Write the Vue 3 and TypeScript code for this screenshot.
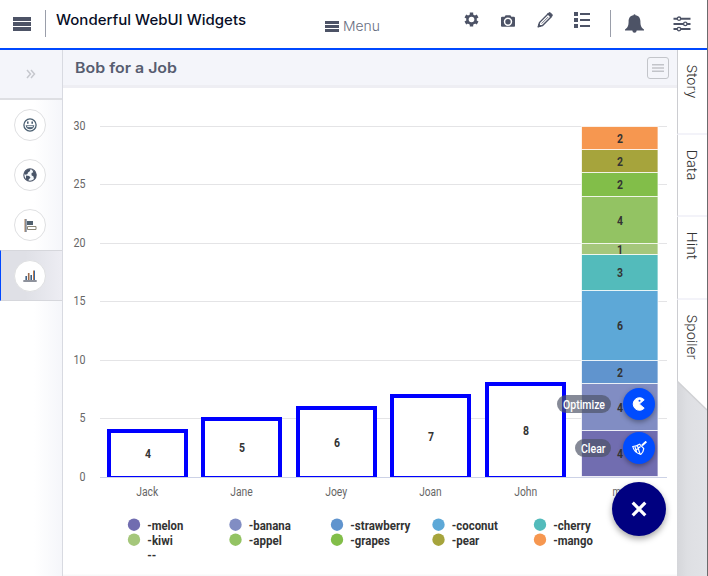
<script setup lang="ts">
interface Label { text: string; width: number }
interface Segment { value: number; top: number; bottom: number; color: string }
interface Legend extends Label { color: string; col: number; row: number }

const ticks = [
  { v: '30', y: 126.5 }, { v: '25', y: 184.5 }, { v: '20', y: 243.5 }, { v: '15', y: 301.5 },
  { v: '10', y: 360.5 }, { v: '5', y: 418.5 }, { v: '0', y: 477.5 },
]
const bars = [
  { name: 'Jack', value: 4, x: 109, top: 431, w: 22 },
  { name: 'Jane', value: 5, x: 203, top: 419, w: 22.5 },
  { name: 'Joey', value: 6, x: 298, top: 408, w: 22 },
  { name: 'Joan', value: 7, x: 392, top: 396, w: 22.5 },
  { name: 'John', value: 8, x: 487, top: 384, w: 23 },
]
const segments: Segment[] = [
  { value: 4, top: 431, bottom: 477, color: '#716db0' },
  { value: 4, top: 384, bottom: 431, color: '#818dc3' },
  { value: 2, top: 361, bottom: 384, color: '#6094ce' },
  { value: 6, top: 291, bottom: 361, color: '#5da8d7' },
  { value: 3, top: 255, bottom: 291, color: '#53bbbb' },
  { value: 1, top: 244, bottom: 255, color: '#a5c77b' },
  { value: 4, top: 197, bottom: 244, color: '#93c363' },
  { value: 2, top: 173, bottom: 197, color: '#82be49' },
  { value: 2, top: 150, bottom: 173, color: '#a6a43c' },
  { value: 2, top: 127, bottom: 150, color: '#f69750' },
]
const legend: Legend[] = [
  { text: '-melon', width: 36, color: '#716db0', col: 0, row: 0 },
  { text: '-banana', width: 42, color: '#818dc3', col: 1, row: 0 },
  { text: '-strawberry', width: 60, color: '#6094ce', col: 2, row: 0 },
  { text: '-coconut', width: 46, color: '#5da8d7', col: 3, row: 0 },
  { text: '-cherry', width: 37.5, color: '#53bbbb', col: 4, row: 0 },
  { text: '-kiwi', width: 25.5, color: '#a5c77b', col: 0, row: 1 },
  { text: '-appel', width: 33, color: '#93c363', col: 1, row: 1 },
  { text: '-grapes', width: 39.5, color: '#82be49', col: 2, row: 1 },
  { text: '-pear', width: 27.5, color: '#a6a43c', col: 3, row: 1 },
  { text: '-mango', width: 39.5, color: '#f69750', col: 4, row: 1 },
  { text: '--', width: 9, color: 'transparent', col: 0, row: 2 },
]
const tabs: Label[] = [
  { text: 'Story', width: 34 }, { text: 'Data', width: 31 },
  { text: 'Hint', width: 28 }, { text: 'Spoiler', width: 45 },
]
const sideItems = ['smile', 'globe', 'align', 'chart']
</script>

<template>
  <div class="app">
    <header class="topbar">
      <svg class="burger" width="18" height="14"><path d="M0 0h18v4H0zM0 5h18v4H0zM0 10h18v4H0z" /></svg>
      <i class="rule first"></i>
      <svg class="brand" width="192" height="24">
        <text x="0" y="17" textLength="190" lengthAdjust="spacingAndGlyphs">Wonderful WebUI Widgets</text>
      </svg>
      <div class="menu">
        <svg width="14" height="12"><path d="M0 0h14v3H0zM0 4h14v3H0zM0 8h14v3H0z" /></svg>
        <svg width="38" height="20"><text x="0" y="14" textLength="37" lengthAdjust="spacingAndGlyphs">Menu</text></svg>
      </div>
      <div class="tools">
        <svg width="15" height="15" viewBox="0 0 15 15">
          <g stroke="#4d5366" stroke-width="3.400"><path d="M7.500 .4V14.600M1.350 3.950L13.650 11.050M1.350 11.050L13.650 3.950" /></g>
          <circle cx="7.500" cy="7.500" r="5.300" /><circle cx="7.500" cy="7.500" r="2.800" fill="#fff" />
        </svg>
        <svg class="camera" width="14" height="12" viewBox="0 0 14 12">
          <path fill-rule="evenodd" d="M1.200 1.700H3.600L4.600.2h4.800L10.400 1.700h2.400q1 0 1.200 1v8.300q0 .8-.8.800H1q-.9 0-1-.8V2.700q0-1 1.200-1zM7 2.500a4.200 4.200 0 1 0 0 8.400 4.200 4.200 0 0 0 0-8.400z" />
          <circle cx="7" cy="6.700" r="2.700" />
        </svg>
        <svg class="pencil" width="16" height="16" viewBox="0 0 16 16" fill="none">
          <path d="M1.500 14.500l1-4 8.500-8.500 3 3-8.500 8.500z" stroke="#4d5366" stroke-width="1.400" />
          <path d="M10.800 1.800l1-1q.8-.6 1.600 0l1.700 1.700q.6.8 0 1.600l-1 1zM1 15l.8-3 2.200 2.200zM4.600 11.600l6.600-6.600" fill="#4d5366" stroke="#4d5366" stroke-width=".8" />
        </svg>
        <svg class="list" width="17" height="16"><path d="M0 0h4v4H0zM0 6h4v4H0zM0 12h4v4H0zM6 1h10v2H6zM6 7h10v2H6zM6 13h10v2H6z" /></svg>
      </div>
      <i class="rule second"></i>
      <svg class="bell" width="19" height="19" viewBox="0 0 19 19">
        <path d="M8.500 1.200a1 1 0 0 1 2 0c3.500.6 4.900 3 4.900 6 0 4.500.8 6.300 3.600 8.300v.9H0v-.9c2.800-2 3.600-3.800 3.600-8.300 0-3 1.400-5.400 4.900-6zM7.300 16.500h4.400q-.2 2.300-2.200 2.300t-2.200-2.300z" />
      </svg>
      <svg class="sliders" width="19" height="16" viewBox="0 0 19 16">
        <path d="M.5 1.700h17v2H.5zM.5 6.900h17v2H.5zM.5 12.100h17v2H.5z" />
        <g fill="#fff" stroke="#4d5366" stroke-width="1.300"><circle cx="6" cy="2.700" r="1.700" /><circle cx="12.300" cy="7.900" r="1.700" /><circle cx="6" cy="13.100" r="1.700" /></g>
      </svg>
    </header>

    <div class="body">
      <nav class="side">
        <div class="expand">
          <svg width="10" height="10" fill="none"><path d="M1 1l3.500 4L1 9M5 1l3.500 4L5 9" stroke="#c6c8ce" stroke-width="1.500" /></svg>
        </div>
        <div v-for="item in sideItems" :key="item" class="item" :class="{ active: item === 'chart' }">
          <span class="disc">
            <svg v-if="item === 'smile'" width="14" height="14" viewBox="0 0 14 14" fill="none">
              <circle cx="7" cy="7" r="6.100" stroke="#4b6072" stroke-width="1.300" />
              <path d="M4.800 3.500v2.300M9.200 3.500v2.300" stroke="#41556b" stroke-width="1.500" />
              <path d="M2.700 7.200h8.600q-.5 4-4.300 4t-4.300-4z" fill="#516477" /><path d="M4.200 8.500h5.600" stroke="#e9eef2" stroke-width="1.200" />
            </svg>
            <svg v-else-if="item === 'globe'" width="14" height="14" viewBox="0 0 14 14" fill="none">
              <circle cx="7" cy="7" r="6.200" fill="#f4f8fb" stroke="#4b5568" stroke-width="1.100" />
              <path d="M.9 6L2.500 2.700 5.500 1l2 .3-.7 1.900L5 4.400 4.500 6l-1.600.7zM3 7.500l3.200.5 1.300 1.700-1.700 1.500-.4 1.900L3 11.500zM9 1.500l2.700 1.700L13.200 6l-.3 3.300-1.900 2.300-.5-3-2-1.300.1-2.300 1.700-.8z" fill="#485467" />
            </svg>
            <svg v-else-if="item === 'align'" width="13" height="13" viewBox="0 0 13 13">
              <path d="M1 0v13" stroke="#b07f50" stroke-width="1" /><path d="M2 0v13" stroke="#3f536e" />
              <path d="M3 2h6v4H3z" fill="#50606e" /><path d="M3.500 7.500h8.500v3H3.500z" fill="#fff" stroke="#8a8778" />
            </svg>
            <svg v-else width="14" height="12" viewBox="0 0 14 12">
              <path d="M.3 11h13.400" stroke="#515766" stroke-width="1.300" />
              <path d="M3.200 6v4M8.200 5v5" stroke="#3f6287" stroke-width="1.600" /><path d="M5.700 3V10" stroke="#9b6a4d" stroke-width="1.600" /><path d="M10.500 .5V10" stroke="#c27a48" /><path d="M11.500 .5V10" stroke="#346baa" />
            </svg>
          </span>
        </div>
      </nav>

      <main class="panel">
        <div class="panel-head">
          <svg width="104" height="24"><text x="0" y="17" textLength="102" lengthAdjust="spacingAndGlyphs">Bob for a Job</text></svg>
          <button class="opts"><svg width="12" height="8"><path d="M0 0h12v1.600H0zM0 3.200h12v1.600H0zM0 6.400h12v1.600H0z" fill="#c2c4c9" /></svg></button>
        </div>
        <svg class="chart" width="614" height="488" viewBox="63 88 614 488">
          <path v-for="t in ticks" :key="t.v" :d="`M100 ${t.y}H667`" :stroke="t.v === '0' ? '#ccd2e6' : '#e4e4e6'" />
          <text v-for="t in ticks" :key="'l' + t.v" class="axis" :x="t.v.length > 1 ? 73.5 : 79.500" :y="t.y + 3.500" :textLength="t.v.length > 1 ? 12 : 6" lengthAdjust="spacingAndGlyphs">{{ t.v }}</text>
          <g v-for="b in bars" :key="b.name">
            <path :d="`M${b.x} 477V${b.top}H${b.x + 77}V477`" fill="#fff" stroke="#00f" stroke-width="4" />
            <path :d="`M${b.x} 476.500h77`" stroke="#00f" />
            <text class="axis" :x="b.x + 27.200" y="496" :textLength="b.w" lengthAdjust="spacingAndGlyphs">{{ b.name }}</text>
            <text class="value" :x="b.x + 36" :y="(b.top + 477) / 2 + 4" textLength="6" lengthAdjust="spacingAndGlyphs">{{ b.value }}</text>
          </g>
          <g v-for="s in segments" :key="s.top">
            <rect x="581.500" :y="s.top - .5" width="76.500" :height="s.bottom - s.top" :fill="s.color" stroke="#fff" stroke-opacity=".75" />
            <text class="value" x="617" :y="(s.top + s.bottom) / 2 + 4" textLength="6" lengthAdjust="spacingAndGlyphs">{{ s.value }}</text>
          </g>
          <path d="M581 477.500h77" stroke="#ccd2e6" />
          <text class="axis" x="612.500" y="496" textLength="18" lengthAdjust="spacingAndGlyphs">max</text>
          <g v-for="l in legend" :key="l.text" :transform="`translate(${134 + l.col * 101.500} ${524.700 + l.row * 15})`">
            <circle r="6.200" :fill="l.color" />
            <text class="legend" x="13.300" y="5.300" :textLength="l.width" lengthAdjust="spacingAndGlyphs">{{ l.text }}</text>
          </g>
        </svg>
      </main>

      <aside class="tabs">
        <div v-for="t in tabs" :key="t.text" class="tab">
          <svg width="28" height="60"><text transform="translate(9 .5) rotate(90)" :textLength="t.width" lengthAdjust="spacingAndGlyphs">{{ t.text }}</text></svg>
        </div>
        <svg class="slope" width="30" height="195" viewBox="0 0 30 195">
          <defs><linearGradient id="fade"><stop offset="0" stop-color="#d5d6da" /><stop offset=".35" stop-color="#dedfe3" /><stop offset="1" stop-color="#e2e3e7" /></linearGradient></defs>
          <path d="M0 0L30 29V195H0z" fill="url(#fade)" /><path d="M0 0L30 29" stroke="#d0d1d4" stroke-width="1.500" />
        </svg>
      </aside>
    </div>

    <div class="fab">
      <div class="action">
        <span class="pill"><svg width="43" height="18"><text x="0" y="13.500" textLength="42" lengthAdjust="spacingAndGlyphs">Optimize</text></svg></span>
        <button class="round">
          <svg width="14" height="14" viewBox="0 0 14 14" fill="#fff"><path d="M12.200 2.800A6.300 6.300 0 1 0 12.200 11.200L7.300 7z" stroke="#fff" stroke-linejoin="round" /><circle cx="7.500" cy="3.700" r="1" fill="#004cff" /></svg>
        </button>
      </div>
      <div class="action">
        <span class="pill"><svg width="25" height="18"><text x="0" y="13.500" textLength="24.500" lengthAdjust="spacingAndGlyphs">Clear</text></svg></span>
        <button class="round">
          <svg width="15" height="14" viewBox="0 0 15 14" fill="none" stroke="#fff" stroke-width="1.200"><path d="M14.300 .5L10 4.500" stroke-width="2" /><path d="M7.300 2.900l4.800 5M7.500 3.200Q4.500 5.400.8 5.500q1 5.700 7.900 7.900 2.700-2 3-5.500M3 6l1.600 5M5.500 5l2.500 8M3.500 9.500L8.500 5.500" /></svg>
        </button>
      </div>
      <button class="close"><svg width="16" height="16"><path d="M1.700 1.700l12.600 12.600M14.300 1.700L1.700 14.300" stroke="#fff" stroke-width="3.200" /></svg></button>
    </div>
    <i class="edge"></i>
  </div>
</template>

<style>
body { background: #fff; overflow: hidden; }
</style>

<style scoped>
.app { position: relative; width: 708px; height: 576px; overflow: hidden; font-family: Inter, "Liberation Sans", sans-serif; }
.app * { box-sizing: border-box; }
svg { display: block; flex: none; }
button { padding: 0; border: 0; display: flex; align-items: center; justify-content: center; }
.topbar { display: flex; align-items: flex-start; height: 50px; padding-left: 13px; border-bottom: 2px solid #0048ff; fill: #4d5366; }
.burger { margin-top: 17px; }
.rule { width: 1px; height: 27px; margin-top: 10px; background: #9a9eaa; flex: none; }
.rule.first { margin-left: 14px; }
.brand { margin: 8px 0 0 10px; font-size: 14.500px; font-weight: 500; fill: #070d26; }
.menu { display: flex; align-items: flex-start; gap: 4px; margin: 21px 0 0 77px; }
.menu svg:last-child { margin-top: -4px; font-size: 13px; font-weight: 300; fill: #686e7f; }
.tools { display: flex; align-items: flex-start; margin: 12px 0 0 82.500px; }
.camera { margin: 2.500px 0 0 22.500px; }
.pencil { margin-left: 22px; }
.list { margin-left: 21px; }
.rule.second { margin-left: 19px; }
.bell { margin: 14px 0 0 14px; }
.sliders { margin: 16px 0 0 29px; }
.body { display: flex; height: 526px; }
.side { width: 63px; flex: none; border-right: 1px solid #d8dae1; background: linear-gradient(90deg, #fff 55%, #f5f6fa); }
.expand { height: 50px; padding: 19px 0 0 26px; background: #f4f5fa; border-bottom: 2px solid #dedfe3; }
.item { height: 50px; padding: 9px 0 0 14px; }
.active { height: 51px; background: linear-gradient(90deg, #dfe0e6 40%, #ededf3); border: solid #d6d7dc; border-width: 1px 0; border-left: 1px solid #0048ff; padding-left: 13px; }
.disc { display: flex; align-items: center; justify-content: center; width: 32px; height: 32px; border: 1px solid #dfe0e2; border-radius: 50%; background: #fff; }
.panel { width: 614px; flex: none; }
.panel-head { display: flex; justify-content: space-between; height: 38px; padding: 6px 8px 0 12px; background: #f4f5fa; border-bottom: 3px solid #eeeef3; font-size: 14.500px; font-weight: 600; fill: #575d70; }
.opts { width: 22px; height: 22px; margin-top: 1px; border: 1px solid #c3c5ca; border-radius: 3px; background: transparent; }
.chart { font-family: Roboto, sans-serif; background: linear-gradient(#fff 99.500%, #f6f6f7); }
.axis { font-size: 12px; fill: #666; }
.value { font-size: 12px; font-weight: 700; fill: #333; }
.legend { font-size: 12.500px; font-weight: 700; fill: #333; }
.tabs { width: 30px; flex: none; }
.tab { height: 82.500px; padding-top: 14px; border-left: 1px solid #cccdd1; border-bottom: 2px solid #f3f3f9; font-size: 13.500px; font-weight: 300; fill: #333; }
.tab:nth-child(1) { height: 84.500px; padding-top: 13.500px; }
.tab:nth-child(4) { height: 81.500px; border-bottom: 0; }
.tab svg { overflow: visible; }
.fab { position: absolute; right: 42px; top: 388px; display: flex; flex-direction: column; align-items: flex-end; gap: 12px; }
.action { display: flex; align-items: center; gap: 12px; margin-right: 11px; }
.pill { height: 18px; padding: 0 5.500px; border-radius: 9px; background: rgba(77, 83, 102, .68); fill: #fff; font: 500 12px Roboto, sans-serif; }
.pill svg { overflow: visible; }
.round { width: 32px; height: 32px; border-radius: 50%; background: #004cff; box-shadow: 0 2px 5px rgba(0, 0, 0, .35); }
.close { width: 54px; height: 54px; margin-top: 6px; border-radius: 50%; background: #000080; box-shadow: 0 3px 6px rgba(0, 0, 0, .35); }
.edge { position: absolute; right: 0; top: 0; width: 1px; height: 576px; background: #6b6b6d; }
</style>
